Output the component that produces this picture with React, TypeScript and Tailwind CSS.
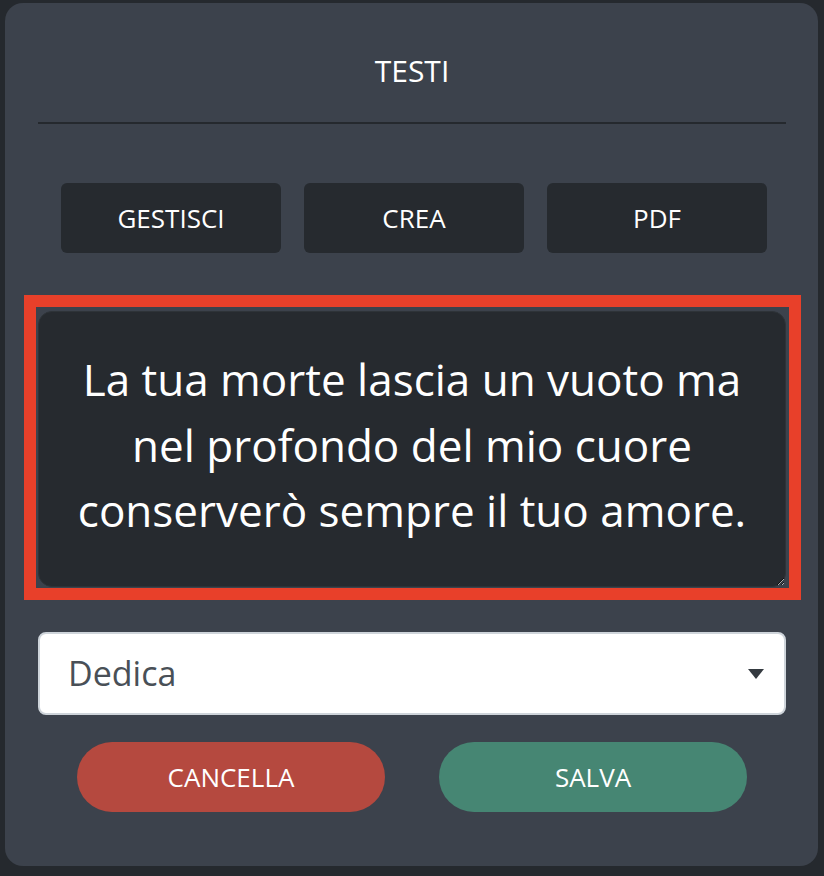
import { ChangeEvent, useState } from 'react'

const font = { fontFamily: '"Open Sans", "Noto Sans", sans-serif' }

const tools = ['GESTISCI', 'CREA', 'PDF']

export default function App() {
  const [text, setText] = useState(
    'La tua morte lascia un vuoto ma\nnel profondo del mio cuore\nconserverò sempre il tuo amore.'
  )

  return (
    <div className="min-h-screen bg-[#25292e] pl-[5px] pt-[3px]" style={font}>
      <div className="flex w-[813px] flex-col rounded-[18px] bg-[#3c424c] px-[33px] pb-[54px] pt-[48px] pr-[32px]">
        <h1 className="text-center text-[30px] leading-[40px] text-white">TESTI</h1>
        <div className="mt-[31px] h-[2px] bg-[#25292e]" />

        <div className="ml-[23px] mr-[19px] mt-[59px] grid grid-cols-3 gap-[23px]">
          {tools.map((label) => (
            <button
              key={label}
              type="button"
              className="h-[70px] rounded-[6px] bg-[#262a2f] text-[26px] text-white"
            >
              {label}
            </button>
          ))}
        </div>

        <div className="-ml-[14px] -mr-[15px] mt-[42px] border-[12px] border-[#e8402a] pb-[1px] pl-[2px] pr-[3px] pt-[4px]">
          <textarea
            value={text}
            onChange={(e: ChangeEvent<HTMLTextAreaElement>) => setText(e.target.value)}
            className="block h-[276px] w-full resize-y rounded-[14px] border border-[#2e3338] bg-[#262a2f] px-3 pt-[35px] text-center text-[44px] leading-[65.5px] text-white outline-none"
            style={font}
          />
        </div>

        <div className="mt-[32px] flex h-[83px] items-center justify-between rounded-[8px] border-2 border-[#ced4da] bg-white pl-[28px] pr-[20px]">
          <span className="text-[34px] text-[#495057]">Dedica</span>
          <svg width="16" height="10" viewBox="0 0 16 10" className="mt-[1px]">
            <path d="M0 0h16L8 10z" fill="#343a40" />
          </svg>
        </div>

        <div className="mt-[27px] flex justify-center gap-[54px]">
          <button
            type="button"
            className="h-[70px] w-[308px] rounded-full bg-[#b5493f] text-[26px] text-white"
          >
            CANCELLA
          </button>
          <button
            type="button"
            className="h-[70px] w-[308px] rounded-full bg-[#468673] text-[26px] text-white"
          >
            SALVA
          </button>
        </div>
      </div>
    </div>
  )
}
